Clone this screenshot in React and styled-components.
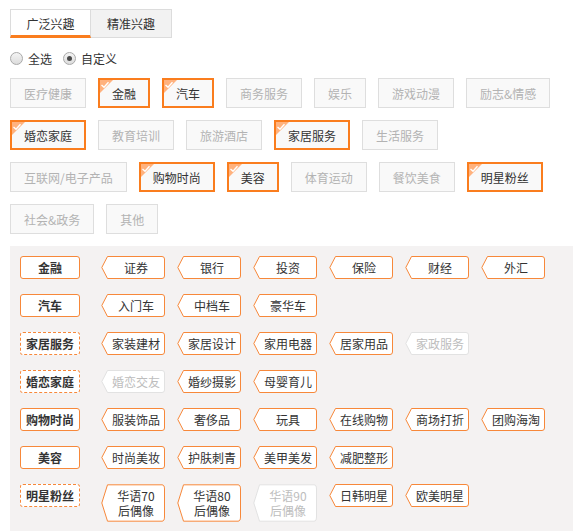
import React, { useState } from 'react';
import styled, { createGlobalStyle, css } from 'styled-components';

const GlobalStyle = createGlobalStyle`
  body {
    margin: 0;
    font-family: "Noto Sans CJK SC", "Noto Sans", sans-serif;
    font-size: 12px;
    color: #333;
    background: #fff;
  }
`;

const ORANGE = '#fa7d1e';
const SOFT_ORANGE = '#f7883a';

const Page = styled.div`
  padding: 9px 14px 0 10px;
`;

const Tabs = styled.div`
  display: flex;
`;

const Tab = styled.div`
  width: 81px;
  height: 29px;
  box-sizing: border-box;
  display: flex;
  align-items: center;
  justify-content: center;
  border: 1px solid #dcdcdc;
  border-left-width: ${(p) => (p.first ? '1px' : '0')};
  background: ${(p) => (p.active ? '#fff' : '#f2f2f2')};
  color: #333;
  cursor: pointer;
  ${(p) =>
    p.active &&
    css`
      border-bottom: 3px solid ${ORANGE};
      padding-top: 2px;
    `}
`;

const RadioRow = styled.div`
  display: flex;
  align-items: center;
  margin-top: 14px;
  height: 13px;
`;

const RadioLabel = styled.label`
  display: flex;
  align-items: center;
  gap: 5px;
  margin-right: 11px;
  cursor: pointer;
`;

const RadioDot = styled.span`
  width: 13px;
  height: 13px;
  box-sizing: border-box;
  border-radius: 50%;
  border: 1px solid #a9a9a9;
  background: linear-gradient(#f4f4f4, #dcdcdc);
  display: flex;
  align-items: center;
  justify-content: center;
  &::after {
    content: '';
    width: 5px;
    height: 5px;
    border-radius: 50%;
    background: ${(p) => (p.checked ? '#4a4a4a' : 'transparent')};
  }
`;

const TagGrid = styled.div`
  display: flex;
  flex-wrap: wrap;
  gap: 12px;
  margin-top: 13px;
  max-width: 556px;
`;

const Tag = styled.div`
  position: relative;
  height: 30px;
  box-sizing: border-box;
  display: flex;
  align-items: center;
  background: #f9f9f9;
  border: 1px solid #dedede;
  padding: 0 13px;
  color: #b3b3b3;
  cursor: pointer;
  ${(p) =>
    p.selected &&
    css`
      border: 2px solid ${ORANGE};
      padding: 0 12px;
      color: #333;
    `}
`;

const Corner = styled.svg`
  position: absolute;
  top: 0;
  left: 0;
  width: 13px;
  height: 13px;
`;

const Panel = styled.div`
  margin-top: 12px;
  background: #f4f2f2;
  padding: 10px 10px 10px 10px;
  display: flex;
  flex-direction: column;
  gap: 15px;
`;

const Row = styled.div`
  display: flex;
  align-items: flex-start;
`;

const GroupLabel = styled.div`
  width: 60px;
  height: 23px;
  flex: none;
  box-sizing: border-box;
  border: 1px ${(p) => (p.partial ? 'dashed' : 'solid')} ${SOFT_ORANGE};
  border-radius: 3px;
  background: #fff;
  font-weight: bold;
  color: #333;
  display: flex;
  align-items: center;
  justify-content: center;
  margin-right: 21px;
`;

const SubList = styled.div`
  display: flex;
  flex-wrap: wrap;
  align-items: flex-start;
  gap: 12px;
`;

const SubTag = styled.div`
  position: relative;
  width: 64px;
  min-height: 23px;
  box-sizing: border-box;
  padding: ${(p) => (p.multi ? '4px 0 4px 6px' : '0 0 0 6px')};
  display: flex;
  align-items: center;
  justify-content: center;
  text-align: center;
  line-height: ${(p) => (p.multi ? '15px' : '23px')};
  color: ${(p) => (p.off ? '#bdbdbd' : '#333')};
  cursor: pointer;
`;

const Outline = styled.svg`
  position: absolute;
  inset: 0;
  width: 100%;
  height: 100%;
  overflow: visible;
`;

const SubText = styled.span`
  position: relative;
  white-space: pre-line;
`;

const topTags = [
  { name: '医疗健康' },
  { name: '金融', on: true },
  { name: '汽车', on: true },
  { name: '商务服务' },
  { name: '娱乐' },
  { name: '游戏动漫' },
  { name: '励志&情感' },
  { name: '婚恋家庭', on: true },
  { name: '教育培训' },
  { name: '旅游酒店' },
  { name: '家居服务', on: true },
  { name: '生活服务' },
  { name: '互联网/电子产品' },
  { name: '购物时尚', on: true },
  { name: '美容', on: true },
  { name: '体育运动' },
  { name: '餐饮美食' },
  { name: '明星粉丝', on: true },
  { name: '社会&政务' },
  { name: '其他' },
];

const groups = [
  { label: '金融', items: ['证券', '银行', '投资', '保险', '财经', '外汇'] },
  { label: '汽车', items: ['入门车', '中档车', '豪华车'] },
  {
    label: '家居服务',
    partial: true,
    items: ['家装建材', '家居设计', '家用电器', '居家用品', { name: '家政服务', off: true }],
  },
  {
    label: '婚恋家庭',
    partial: true,
    items: [{ name: '婚恋交友', off: true }, '婚纱摄影', '母婴育儿'],
  },
  { label: '购物时尚', items: ['服装饰品', '奢侈品', '玩具', '在线购物', '商场打折', '团购海淘'] },
  { label: '美容', items: ['时尚美妆', '护肤刺青', '美甲美发', '减肥整形'] },
  {
    label: '明星粉丝',
    partial: true,
    items: ['华语70\n后偶像', '华语80\n后偶像', { name: '华语90\n后偶像', off: true }, '日韩明星', '欧美明星'],
  },
];

const CheckCorner = () => (
  <Corner viewBox="0 0 13 13">
    <path d="M0 0 H13 L0 13 Z" fill="#ffb27e" />
    <path d="M1.5 5 L4 7.2 L8.5 2.2" stroke="#fff" strokeWidth="1.4" fill="none" />
  </Corner>
);

const Sub = ({ item }) => {
  const name = typeof item === 'string' ? item : item.name;
  const off = typeof item !== 'string' && item.off;
  const multi = name.includes('\n');
  return (
    <SubTag off={off} multi={multi}>
      <Outline viewBox="0 0 64 23" preserveAspectRatio="none">
        <path
          d="M6.5 0.5 H61 Q63.5 0.5 63.5 3 V20 Q63.5 22.5 61 22.5 H6.5 L0.8 11.5 Z"
          fill="#fff"
          stroke={off ? '#e2e2e2' : SOFT_ORANGE}
          strokeWidth="1"
          vectorEffect="non-scaling-stroke"
        />
      </Outline>
      <SubText>{name}</SubText>
    </SubTag>
  );
};

export default function App() {
  const [tab, setTab] = useState(0);
  const [mode, setMode] = useState('custom');

  return (
    <Page>
      <GlobalStyle />
      <Tabs>
        <Tab first active={tab === 0} onClick={() => setTab(0)}>
          广泛兴趣
        </Tab>
        <Tab active={tab === 1} onClick={() => setTab(1)}>
          精准兴趣
        </Tab>
      </Tabs>

      <RadioRow>
        <RadioLabel onClick={() => setMode('all')}>
          <RadioDot checked={mode === 'all'} />
          全选
        </RadioLabel>
        <RadioLabel onClick={() => setMode('custom')}>
          <RadioDot checked={mode === 'custom'} />
          自定义
        </RadioLabel>
      </RadioRow>

      <TagGrid>
        {topTags.map((t) => (
          <Tag key={t.name} selected={t.on}>
            {t.on && <CheckCorner />}
            {t.name}
          </Tag>
        ))}
      </TagGrid>

      <Panel>
        {groups.map((g) => (
          <Row key={g.label}>
            <GroupLabel partial={g.partial}>{g.label}</GroupLabel>
            <SubList>
              {g.items.map((it, i) => (
                <Sub key={i} item={it} />
              ))}
            </SubList>
          </Row>
        ))}
      </Panel>
    </Page>
  );
}
